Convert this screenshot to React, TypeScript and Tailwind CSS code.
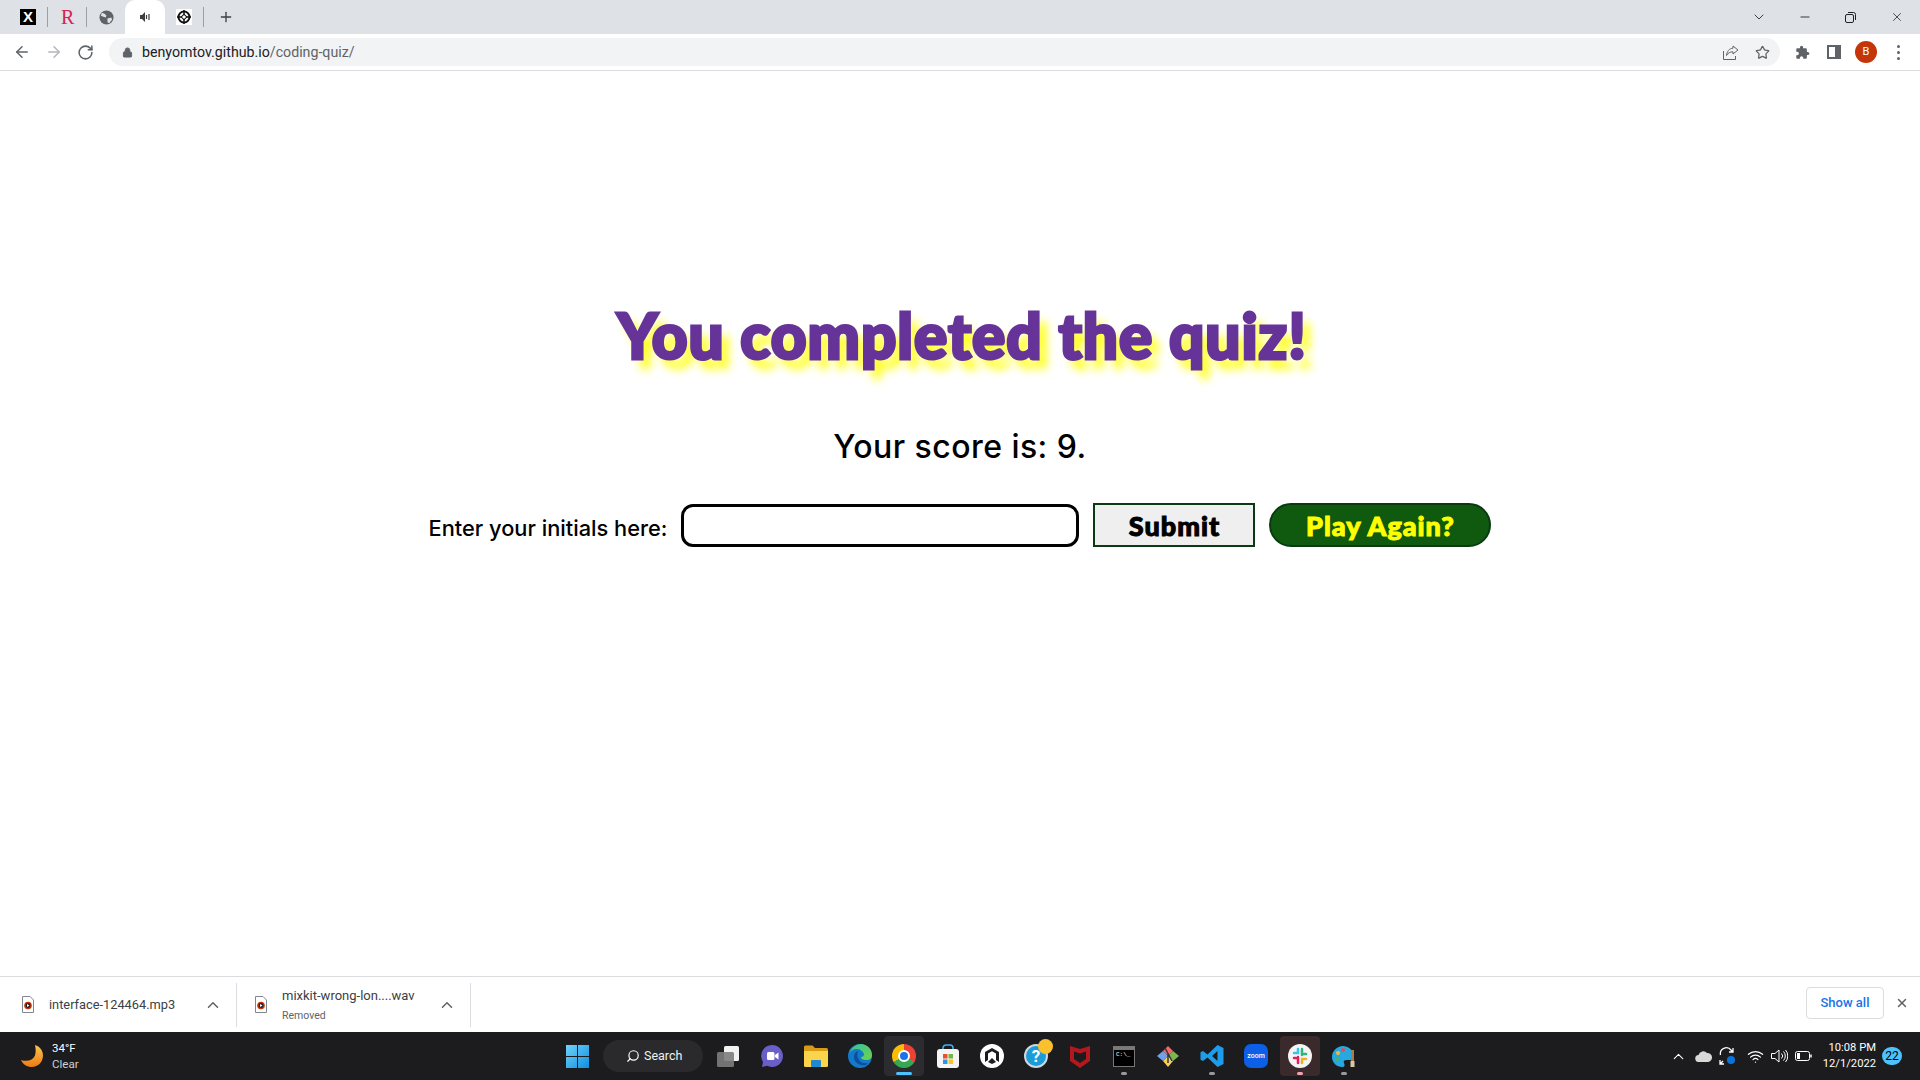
import { ChevronDown, ChevronUp, Minus, X, ArrowLeft, ArrowRight, RotateCw, Lock, Star, Plus, Search, Wifi } from 'lucide-react';

const uiFont = "font-['Roboto','Liberation_Sans',sans-serif]";
const chunky = "font-['Lato','Liberation_Sans',sans-serif] font-black";

function Sep() {
  return <div className="h-[20px] w-px bg-[#9aa0a6]" />;
}

function TabBar() {
  return (
    <div className="flex h-[34px] items-center bg-[#dee1e6]">
      <div className="ml-[20px] flex h-[16px] w-[16px] items-center justify-center bg-black font-['Liberation_Sans',sans-serif] text-[15px] font-bold text-white">X</div>
      <div className="ml-[11px]"><Sep /></div>
      <div className="ml-[13px] w-[15px] font-['Liberation_Serif',serif] text-[20px] leading-none text-[#d6244e]">R</div>
      <div className="ml-[10px]"><Sep /></div>
      <svg className="ml-[12px]" width="15" height="15" viewBox="0 0 16 16">
        <circle cx="8" cy="8" r="7.5" fill="#5f6368" />
        <path d="M3 3l3 1 2 2-1 2-3-1-2-1zM9 9l4-1 1 2-3 4-2-1z" fill="#dee1e6" />
      </svg>
      <div className="relative ml-[11px] flex h-[34px] w-[40px] items-center justify-center rounded-t-[10px] bg-white">
        <svg width="11" height="10" viewBox="0 0 11 10">
          <path d="M0 3h2l3-3v10L2 7H0z" fill="#3c4043" />
          <path d="M6.500 3v4M9 2v6" stroke="#3c4043" strokeWidth="1.200" />
        </svg>
      </div>
      <div className="ml-[11px] flex h-[16px] w-[16px] items-center justify-center bg-white">
        <svg width="14" height="14" viewBox="0 0 14 14">
          <circle cx="7" cy="7" r="5.500" fill="none" stroke="#111" strokeWidth="2" />
          <path d="M7 0v14M0 7h14" stroke="#111" strokeWidth="1.500" />
          <rect x="5" y="5" width="4" height="4" fill="#fff" stroke="#111" transform="rotate(45 7 7)" />
        </svg>
      </div>
      <div className="ml-[11px]"><Sep /></div>
      <Plus className="ml-[14px] h-[16px] w-[16px] text-[#3c4043]" strokeWidth={2} />
      <div className="ml-auto flex items-center">
        <ChevronDown className="h-[16px] w-[16px] text-[#3c4043]" strokeWidth={1.5} />
        <Minus className="ml-[31px] h-[14px] w-[14px] text-[#202124]" strokeWidth={1.5} />
        <svg className="ml-[33px]" width="11" height="11" viewBox="0 0 11 11" fill="none" stroke="#202124">
          <rect x="0.500" y="2.500" width="8" height="8" rx="1.500" />
          <path d="M3 .5h5.500a2 2 0 0 1 2 2V8" />
        </svg>
        <X className="ml-[34px] mr-[16px] h-[14px] w-[14px] text-[#202124]" strokeWidth={1.3} />
      </div>
    </div>
  );
}

function Toolbar() {
  return (
    <div className="flex h-[37px] items-center border-b border-[#dadce0] bg-white">
      <ArrowLeft className="ml-[13px] h-[18px] w-[18px] text-[#5f6368]" strokeWidth={2} />
      <ArrowRight className="ml-[14px] h-[18px] w-[18px] text-[#b4b7bb]" strokeWidth={2} />
      <RotateCw className="ml-[14px] h-[17px] w-[17px] text-[#5f6368]" strokeWidth={2.2} />
      <div className="ml-[15px] flex h-[28px] w-[1671px] items-center rounded-full bg-[#f1f3f4]">
        <Lock className="ml-[13px] h-[11px] w-[11px] text-[#5f6368]" fill="#5f6368" strokeWidth={2} />
        <span className={`ml-[9px] mt-px text-[14.2px] text-[#202124] ${uiFont}`}>
          benyomtov.github.io<span className="text-[#5f6368]">/coding-quiz/</span>
        </span>
        <svg className="ml-auto" width="16" height="15" viewBox="0 0 16 15" fill="none" stroke="#5f6368" strokeWidth="1">
          <path d="M.5 6v8.500h12V11" />
          <path d="M10 1l5 4-5 4V6.800C7 6.800 5 8 3.500 10.500 4 6.500 6 3.500 10 3.200z" />
        </svg>
        <Star className="ml-[16px] mr-[10px] h-[15px] w-[15px] text-[#5f6368]" strokeWidth={2} />
      </div>
      <svg className="ml-[15px]" width="15" height="15" viewBox="0 0 24 24" fill="#5f6368">
        <path d="M20.500 11H19V7a2 2 0 0 0-2-2h-4V3.500a2.500 2.500 0 0 0-5 0V5H4a2 2 0 0 0-2 2v3.800h1.500a2.700 2.700 0 0 1 0 5.400H2V20a2 2 0 0 0 2 2h3.800v-1.500a2.700 2.700 0 0 1 5.400 0V22H17a2 2 0 0 0 2-2v-4h1.500a2.500 2.500 0 0 0 0-5z" />
      </svg>
      <div className="ml-[17px] flex h-[14px] w-[14px] justify-end border-2 border-[#5f6368]">
        <div className="h-full w-[4px] bg-[#5f6368]" />
      </div>
      <div className={`ml-[14px] flex h-[22px] w-[22px] items-center justify-center rounded-full bg-[#c5350a] text-[11px] text-white ${uiFont}`}>B</div>
      <div className="ml-[20px] flex flex-col gap-[3px]">
        <div className="h-[3px] w-[3px] rounded-full bg-[#5f6368]" />
        <div className="h-[3px] w-[3px] rounded-full bg-[#5f6368]" />
        <div className="h-[3px] w-[3px] rounded-full bg-[#5f6368]" />
      </div>
    </div>
  );
}

function QuizEnd() {
  return (
    <main className="flex flex-1 flex-col items-center bg-white">
      <h1 className={`ml-[4px] mt-[218px] text-[62px] leading-[92px] tracking-[1px] text-[#663399] [-webkit-text-stroke:3px_#663399] [text-shadow:8px_10px_10px_#ffff00] ${chunky}`}>
        You completed the quiz!
      </h1>
      <p className="mt-[47px] font-['Inter',sans-serif] text-[32px] font-medium leading-[38px] tracking-[0.45px] text-black">Your score is: 9.</p>
      <div className="mt-[37px] flex items-center gap-[14px]">
        <label className="mt-[6px] font-['Inter',sans-serif] text-[21.8px] font-medium text-black">Enter your initials here:</label>
        <input className="h-[43px] w-[398px] rounded-[12px] border-[3px] border-black bg-white" />
        <button className={`h-[44px] w-[162px] border-2 border-[#0a3a12] bg-[#efefef] text-[27px] leading-none tracking-[1px] text-black [-webkit-text-stroke:1px_#000] ${chunky}`}>Submit</button>
        <button className={`h-[44px] w-[222px] rounded-full border-2 border-[#0a3a12] bg-[#0f5a0f] text-[27px] leading-none tracking-[1px] text-[#ffff00] [-webkit-text-stroke:1px_#ffff00] ${chunky}`}>Play Again?</button>
      </div>
    </main>
  );
}

function FileIcon() {
  return (
    <svg width="12" height="17" viewBox="0 0 12 17">
      <path d="M.5.500h7.500l3.500 3.500v12.500H.5z" fill="#fff" stroke="#80868b" />
      <circle cx="6" cy="9.500" r="3.800" fill="#c5350a" />
      <circle cx="6" cy="9.500" r="2.400" fill="#202124" />
      <path d="M5 8l2.500 1.500L5 11z" fill="#fff" />
    </svg>
  );
}

function DownloadShelf() {
  return (
    <div className={`flex h-[56px] items-center border-t border-[#dadce0] bg-white ${uiFont}`}>
      <div className="ml-[22px]"><FileIcon /></div>
      <span className="ml-[15px] w-[155px] text-[12.8px] text-[#3c4043]">interface-124464.mp3</span>
      <ChevronUp className="h-[18px] w-[18px] text-[#5f6368]" strokeWidth={2} />
      <div className="ml-[14px] h-[44px] w-px bg-[#dadce0]" />
      <div className="ml-[18px]"><FileIcon /></div>
      <div className="ml-[15px] flex w-[156px] flex-col">
        <span className="text-[13px] leading-[16px] text-[#3c4043]">mixkit-wrong-lon....wav</span>
        <span className="mt-[6px] text-[10.5px] leading-[12px] text-[#5f6368]">Removed</span>
      </div>
      <ChevronUp className="h-[18px] w-[18px] text-[#5f6368]" strokeWidth={2} />
      <div className="ml-[14px] h-[44px] w-px bg-[#dadce0]" />
      <button className="mb-[4px] ml-auto h-[32px] w-[78px] rounded-[4px] border border-[#dadce0] text-[13px] font-medium text-[#1a73e8]">Show all</button>
      <X className="mb-[3px] ml-[11px] mr-[11px] h-[14px] w-[14px] text-[#5f6368]" strokeWidth={2.5} />
    </div>
  );
}

function Slot({ className = '', dot, children }: { className?: string; dot?: string; children: React.ReactNode }) {
  return (
    <div className={`relative mx-[2px] flex h-[40px] w-[40px] items-center justify-center rounded-[4px] ${className}`}>
      {children}
      {dot && <div className={`absolute bottom-[1px] h-[3px] rounded-full ${dot}`} />}
    </div>
  );
}

function Taskbar() {
  return (
    <div className={`flex h-[48px] items-center bg-[#1c1c1f] text-white ${uiFont}`}>
      <div className="flex w-[556px] items-center">
        <svg className="ml-[21px]" width="22" height="22" viewBox="0 0 22 22">
          <defs>
            <linearGradient id="moon" x1="0" y1="0" x2="0" y2="1">
              <stop offset="0" stopColor="#f9c74f" />
              <stop offset="1" stopColor="#ee7a12" />
            </linearGradient>
          </defs>
          <path d="M14 0c5 1.500 8 5.500 8 10.500C22 17 17 22 11 22 6 22 2 19.500 0 15c6 2 12 .5 14-4.500 1-3.500.8-7-0-10.500z" fill="url(#moon)" />
        </svg>
        <div className="ml-[9px] flex flex-col text-[11.5px] leading-[16px]">
          <span>34°F</span>
          <span className="text-[#d0d0d0]">Clear</span>
        </div>
      </div>
      <div className="flex w-[47px] justify-start pl-[10px]">
        <svg width="23" height="23" viewBox="0 0 23 23">
          <defs>
            <linearGradient id="win" x1="0" y1="0" x2="1" y2="1">
              <stop offset="0" stopColor="#6fd3fb" />
              <stop offset="1" stopColor="#0f8fe0" />
            </linearGradient>
          </defs>
          <path d="M0 0h11v11H0zM12 0h11v11H12zM0 12h11v11H0zM12 12h11v11H12z" fill="url(#win)" />
        </svg>
      </div>
      <div className="flex h-[32px] w-[100px] items-center rounded-full bg-[#2a2a2d] pl-[23px]">
        <Search className="h-[14px] w-[14px] -scale-x-100 text-white" strokeWidth={2} />
        <span className="ml-[4px] text-[12.5px] text-[#f0f0f0]">Search</span>
      </div>
      <div className="ml-[3px] flex items-center">
        <Slot>
          <svg width="24" height="22" viewBox="0 0 24 22">
            <rect x="8" y="1" width="15" height="15" rx="1.500" fill="#f2f2f2" />
            <rect x="1" y="7" width="17" height="15" rx="1.500" fill="#7d7d7d" fillOpacity="0.9" />
          </svg>
        </Slot>
        <Slot>
          <svg width="24" height="24" viewBox="0 0 24 24">
            <path d="M12 1a11 11 0 1 1-5 20.800L2 23l1-5A11 11 0 0 1 12 1z" fill="#6a5fc9" />
            <rect x="7" y="8" width="7.500" height="8" rx="1.500" fill="#fff" />
            <path d="M15 11l3.500-2.500v7L15 13z" fill="#fff" />
          </svg>
        </Slot>
        <Slot>
          <svg width="24" height="22" viewBox="0 0 24 22">
            <path d="M0 2a1.500 1.500 0 0 1 1.500-1.500h7L11 3h11.500A1.500 1.500 0 0 1 24 4.500V8H0z" fill="#d99b17" />
            <path d="M0 6h24v14.500a1.500 1.500 0 0 1-1.500 1.500h-21A1.500 1.500 0 0 1 0 20.500z" fill="#fbd44b" />
            <rect x="7" y="15" width="10" height="7" rx="1" fill="#1f88d0" />
          </svg>
        </Slot>
        <Slot>
          <svg width="24" height="24" viewBox="0 0 24 24">
            <defs>
              <linearGradient id="edge" x1="0" y1="0" x2="1" y2="1">
                <stop offset="0" stopColor="#35c1a1" />
                <stop offset="1" stopColor="#6ed34a" />
              </linearGradient>
            </defs>
            <circle cx="12" cy="12" r="12" fill="#1479c9" />
            <path d="M1 10C3 3 9 0 13 0c6 0 11 5 11 11 0 3-2 5-6 5-3 0-5-1-5-3 2 0 3-1 3-3-1-3-4-5-7-5-4 0-7 2-8 5z" fill="url(#edge)" />
            <path d="M10 7c-4 1-5 6-3 10 2 3 6 5 11 4l2-2c-5 1-8-1-9-3-2-3-2-6-1-9z" fill="#0c4f9c" />
          </svg>
        </Slot>
        <Slot className="bg-[#2c2c30]" dot="w-[16px] bg-[#4cc2ff]">
          <div className="relative h-[24px] w-[24px] rounded-full bg-[conic-gradient(#ea4335_0deg_120deg,#34a853_120deg_240deg,#fbbc04_240deg_360deg)]">
            <div className="absolute left-[6px] top-[6px] h-[12px] w-[12px] rounded-full border-[2px] border-white bg-[#1a73e8]" />
          </div>
        </Slot>
        <Slot>
          <svg width="24" height="24" viewBox="0 0 24 24">
            <path d="M7 6V4a3 3 0 0 1 3-3h4a3 3 0 0 1 3 3v2" fill="none" stroke="#3db4ef" strokeWidth="1.500" />
            <rect x="1" y="5" width="22" height="19" rx="3" fill="#f4f4f4" />
            <path d="M7 10h4.500v4.500H7z" fill="#e9502f" />
            <path d="M12.500 10H17v4.500h-4.500z" fill="#72b83b" />
            <path d="M7 15.500h4.500V20H7z" fill="#2c97e0" />
            <path d="M12.500 15.500H17V20h-4.500z" fill="#fcc22d" />
          </svg>
        </Slot>
        <Slot>
          <svg width="24" height="24" viewBox="0 0 24 24">
            <circle cx="12" cy="12" r="12" fill="#fff" />
            <path d="M12 4l7 4v10l-3-2V9.500l-4-2.300-4 2.300V16l-3 2V8zM12 14l4 4-4 2-4-2z" fill="#1c1c1f" />
          </svg>
        </Slot>
        <Slot>
          <div className="relative h-[24px] w-[24px]">
            <div className="flex h-[24px] w-[24px] items-center justify-center rounded-full border-2 border-[#cfd8dc] bg-[#1b9bd8] text-[17px] font-bold leading-none text-white">?</div>
            <div className="absolute -right-[5px] -top-[5px] h-[15px] w-[15px] rounded-full bg-[#fbc02d]" />
          </div>
        </Slot>
        <Slot>
          <svg width="20" height="24" viewBox="0 0 20 24">
            <path d="M0 2l10 3 10-3v15l-10 7-10-7zM4 7.500v7.500l6 4 6-4V7.500l-6 2z" fill="#b3181e" fillRule="evenodd" />
          </svg>
        </Slot>
        <Slot dot="w-[6px] bg-[#9a9a9a]">
          <div className="h-[21px] w-[22px] border border-[#777] bg-black">
            <div className="h-[3px] bg-[#7a7a7a]" />
            <div className="pl-[2px] font-['Liberation_Mono',monospace] text-[6px] leading-[9px] text-white">C:\_</div>
          </div>
        </Slot>
        <Slot>
          <svg width="24" height="24" viewBox="0 0 24 24">
            <path d="M12 12L7 7l5-5 5 5z" fill="#f06a6a" />
            <path d="M12 12l5-5 6 5-6 5z" fill="#7bb94f" />
            <path d="M12 12l5 5-5 6-5-6z" fill="#f7d155" />
            <path d="M12 12l-5 5-6-5 6-5z" fill="#6fa2ea" />
            <path d="M9 4l7 13M12 9v10" stroke="#33333a" strokeWidth="1.500" />
          </svg>
        </Slot>
        <Slot dot="w-[6px] bg-[#9a9a9a]">
          <svg width="24" height="24" viewBox="0 0 24 24">
            <path d="M17.500 1L23.500 4v16l-6 3L7.500 13.500 3 17l-2.500-1.300v-7.400L3 7l4.500 3.500zM17.500 7l-5.500 5 5.500 5z" fill="#1f9ce8" fillRule="evenodd" />
          </svg>
        </Slot>
        <Slot>
          <div className="flex h-[24px] w-[24px] items-center justify-center rounded-[7px] bg-[#0e5fe8] text-[7px] font-medium text-white">zoom</div>
        </Slot>
        <Slot className="bg-[#3a2a2c]" dot="w-[6px] bg-[#f2a6b0]">
          <svg width="24" height="24" viewBox="0 0 24 24">
            <circle cx="12" cy="12" r="12" fill="#f4f4f4" />
            <path d="M10 5v4H6" stroke="#36c5f0" strokeWidth="2.500" fill="none" strokeLinecap="round" />
            <path d="M14 5v6M18 10h-2" stroke="#2eb67d" strokeWidth="2.500" fill="none" strokeLinecap="round" />
            <path d="M14 19v-4h4" stroke="#ecb22e" strokeWidth="2.500" fill="none" strokeLinecap="round" />
            <path d="M10 19v-6M6 14h2" stroke="#e01e5a" strokeWidth="2.500" fill="none" strokeLinecap="round" />
          </svg>
        </Slot>
        <Slot dot="w-[6px] bg-[#9a9a9a]">
          <svg width="24" height="24" viewBox="0 0 24 24">
            <path d="M11 2C5 2 0 7 0 13s5 10 10 10c3 0 3-2 2-4s0-3 3-3h3c3 0 3-3 3-6 0-4-5-8-10-8z" fill="#27a9e0" />
            <circle cx="6" cy="9" r="2" fill="#f6b73c" />
            <circle cx="11" cy="6" r="2" fill="#e84b5c" />
            <circle cx="5" cy="15" r="2" fill="#43b36b" />
            <path d="M19 6l3 0v11h-3z" fill="#a97b45" />
            <path d="M18.500 17h4v6h-4z" fill="#d8c7a5" />
          </svg>
        </Slot>
      </div>
      <div className="ml-auto flex items-center">
        <ChevronUp className="h-[17px] w-[17px] text-white" strokeWidth={1.5} />
        <svg className="ml-[8px]" width="17" height="12" viewBox="0 0 17 12">
          <path d="M4 12a3.500 3.500 0 0 1-.5-7A5 5 0 0 1 12 3a4 4 0 0 1 1 9z" fill="#d8d8d8" />
        </svg>
        <svg className="ml-[7px]" width="17" height="18" viewBox="0 0 17 18" fill="none" stroke="#fff" strokeWidth="1.300">
          <path d="M1.500 8A6 6 0 0 1 12 3l2 2M14 1v4h-4M1 17l3-3M1 13v4h4" />
          <circle cx="12" cy="13" r="4" fill="#0a74d8" stroke="none" />
        </svg>
        <Wifi className="ml-[11px] h-[17px] w-[17px] text-white" strokeWidth={1.7} />
        <svg className="ml-[7px]" width="17" height="14" viewBox="0 0 17 14" fill="none" stroke="#fff" strokeWidth="1">
          <path d="M.5 4.500H4L8 1v12L4 9.500H.5zM10.500 4.500a3.500 3.500 0 0 1 0 5M12.500 2.500a6.500 6.500 0 0 1 0 9M14.500 1a9 9 0 0 1 0 12" />
        </svg>
        <svg className="ml-[7px]" width="17" height="10" viewBox="0 0 17 10" fill="none" stroke="#fff">
          <rect x=".5" y=".5" width="14" height="9" rx="2" />
          <rect x="2" y="2" width="3" height="6" fill="#fff" stroke="none" />
          <path d="M16 3.500v3" strokeWidth="1.500" />
        </svg>
        <div className="ml-[11px] flex flex-col items-end text-[11.2px] leading-[16px]">
          <span>10:08 PM</span>
          <span>12/1/2022</span>
        </div>
        <div className="ml-[6px] mr-[18px] flex h-[18px] w-[20px] items-center justify-center rounded-full bg-[#4cc2ff] text-[12px] text-black">22</div>
      </div>
    </div>
  );
}

export default function App() {
  return (
    <div className="flex h-screen w-full flex-col overflow-hidden">
      <TabBar />
      <Toolbar />
      <QuizEnd />
      <DownloadShelf />
      <Taskbar />
    </div>
  );
}
